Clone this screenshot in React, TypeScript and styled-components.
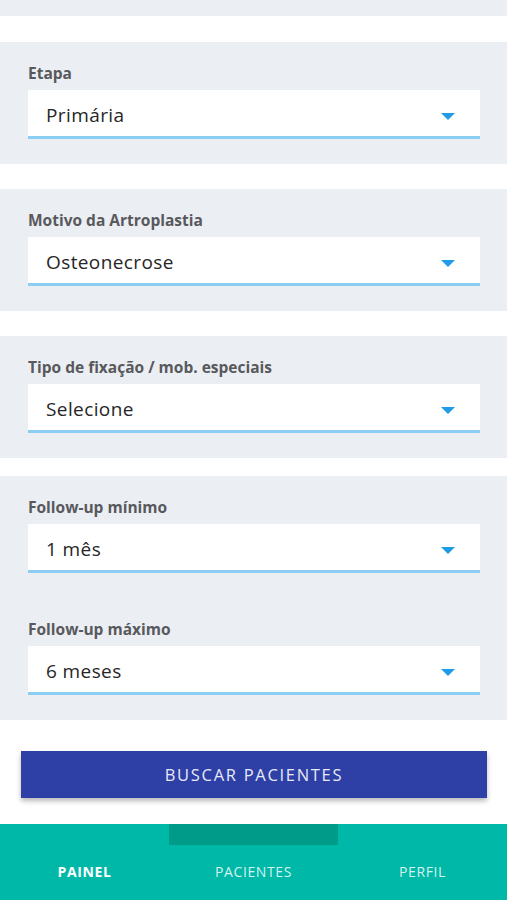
import React from "react";
import styled, { createGlobalStyle } from "styled-components";

const GlobalStyle = createGlobalStyle`
  html, body {
    margin: 0;
    padding: 0;
    background: #ffffff;
  }
  body {
    font-family: "Open Sans", "Noto Sans", sans-serif;
  }
`;

const Page = styled.div`
  width: 507px;
  height: 900px;
  display: flex;
  flex-direction: column;
  overflow: hidden;
`;

const Content = styled.div`
  flex: 1;
  display: flex;
  flex-direction: column;
`;

const TopEdge = styled.div`
  height: 16px;
  background: #ebeef3;
  margin-bottom: 26px;
`;

const Section = styled.div<{ $gap: number }>`
  background: #ebeef3;
  padding: 21px 27px 25px 28px;
  margin-bottom: ${(p) => p.$gap}px;
  display: flex;
  flex-direction: column;
  gap: 46px;
`;

const Field = styled.div`
  display: flex;
  flex-direction: column;
  gap: 7px;
`;

const Label = styled.div`
  font-size: 15.5px;
  line-height: 20px;
  font-weight: 700;
  color: #58595c;
`;

const Select = styled.div`
  height: 46px;
  box-sizing: border-box;
  background: #ffffff;
  border-bottom: 3px solid #8ccdf4;
  display: flex;
  align-items: center;
  justify-content: space-between;
  padding: 4px 25px 0 18px;
  height: 49px;
`;

const Value = styled.span`
  font-size: 19px;
  color: #262626;
  letter-spacing: 0.4px;
`;

const Caret = styled.div`
  width: 0;
  height: 0;
  border-left: 7px solid transparent;
  border-right: 7px solid transparent;
  border-top: 7px solid #1f9be8;
  margin-top: 2px;
`;

const ButtonArea = styled.div`
  flex: 1;
  padding: 31px 20px 0 21px;
`;

const Button = styled.button`
  width: 100%;
  height: 47px;
  border: none;
  background: #2e3fa6;
  color: #e6e9f6;
  font-family: "Open Sans", "Noto Sans", sans-serif;
  font-size: 16.5px;
  letter-spacing: 1.7px;
  box-shadow: 0 3px 5px rgba(0, 0, 0, 0.28);
`;

const Nav = styled.nav`
  height: 76px;
  background: #00b8a7;
  display: grid;
  grid-template-columns: repeat(3, 1fr);
  position: relative;
`;

const Indicator = styled.div`
  position: absolute;
  top: 0;
  left: 169px;
  width: 169px;
  height: 21px;
  background: #009b89;
`;

const Tab = styled.div<{ $active?: boolean }>`
  display: flex;
  align-items: center;
  justify-content: center;
  padding-top: 18px;
  font-size: 14px;
  letter-spacing: 0.6px;
  font-weight: ${(p) => (p.$active ? 700 : 400)};
  color: ${(p) => (p.$active ? "#ffffff" : "#d4f2ee")};
`;

type Item = { label: string; value: string };

const sections: { items: Item[]; gap: number }[] = [
  { items: [{ label: "Etapa", value: "Primária" }], gap: 25 },
  { items: [{ label: "Motivo da Artroplastia", value: "Osteonecrose" }], gap: 25 },
  { items: [{ label: "Tipo de fixação / mob. especiais", value: "Selecione" }], gap: 18 },
  {
    items: [
      { label: "Follow-up mínimo", value: "1 mês" },
      { label: "Follow-up máximo", value: "6 meses" },
    ],
    gap: 0,
  },
];

export default function App() {
  return (
    <Page>
      <GlobalStyle />
      <Content>
        <TopEdge />
        {sections.map((s, i) => (
          <Section key={i} $gap={s.gap}>
            {s.items.map((item) => (
              <Field key={item.label}>
                <Label>{item.label}</Label>
                <Select>
                  <Value>{item.value}</Value>
                  <Caret />
                </Select>
              </Field>
            ))}
          </Section>
        ))}
        <ButtonArea>
          <Button>BUSCAR PACIENTES</Button>
        </ButtonArea>
      </Content>
      <Nav>
        <Indicator />
        <Tab $active>PAINEL</Tab>
        <Tab>PACIENTES</Tab>
        <Tab>PERFIL</Tab>
      </Nav>
    </Page>
  );
}
